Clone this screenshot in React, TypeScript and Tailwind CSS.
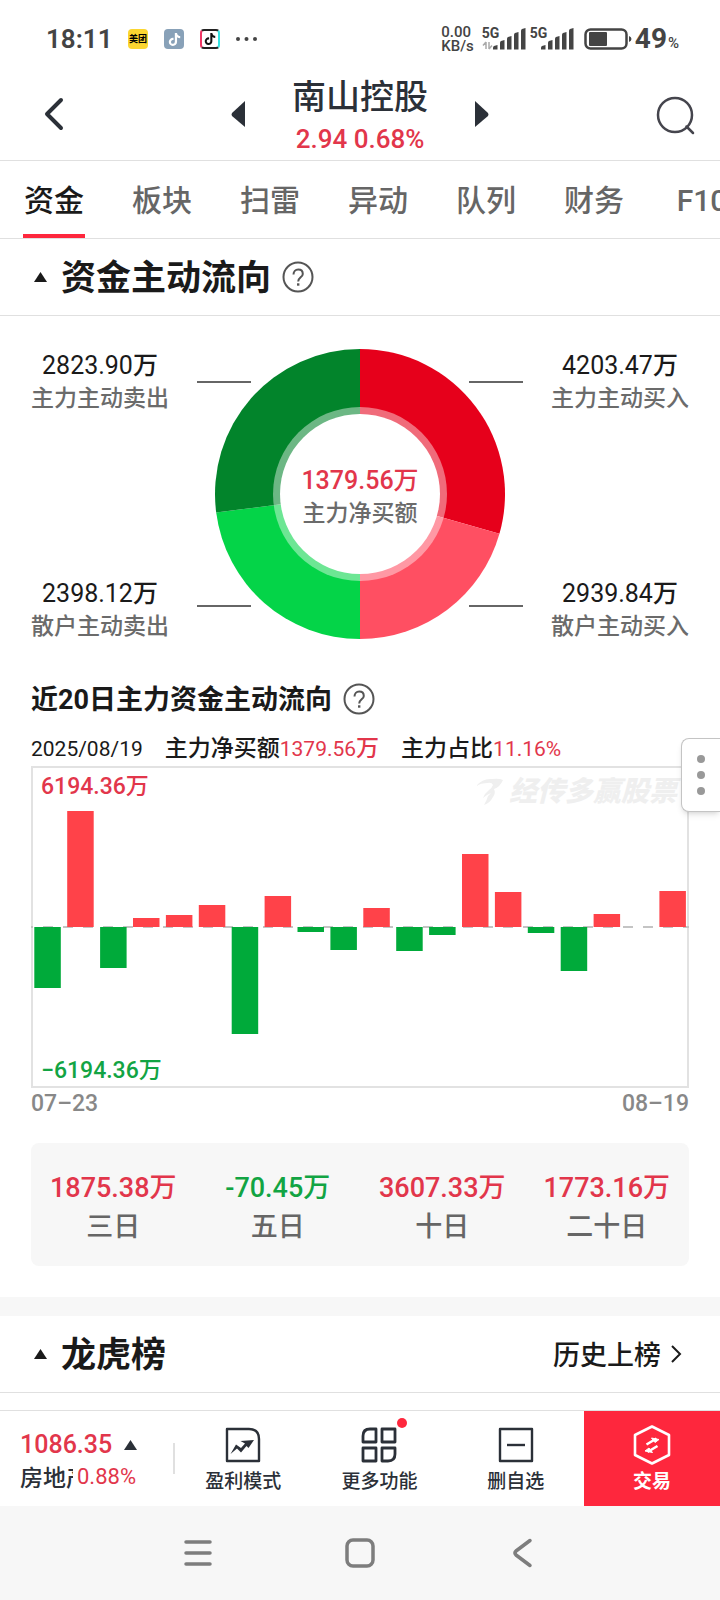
import React from 'react'
import { FaTiktok } from 'react-icons/fa6'

const tabs = ['资金', '板块', '扫雷', '异动', '队列', '财务', 'F10']

const flow = {
  mainSell: 2823.9,
  mainBuy: 4203.47,
  retailSell: 2398.12,
  retailBuy: 2939.84,
}

// bar heights in chart units, positive is net buying
const bars = [-61, 116, -41, 9, 12, 22, -107, 31, -5, -23, 19, -24, -8, 73, 35, -6, -44, 13, 0, 36]

const summary = [
  { value: '1875.38', label: '三日', up: true },
  { value: '-70.45', label: '五日', up: false },
  { value: '3607.33', label: '十日', up: true },
  { value: '1773.16', label: '二十日', up: true },
]

const Signal = ({ active = false }: { active?: boolean }) => (
  <svg width="45" height="24" viewBox="0 0 45 24" fill="#444">
    {[3, 8, 12, 16, 20].map((h, i) => (
      <path key={i} d={`M${11 + i * 7} 22.5v${-h + 1}q0-1 1-1.500l3.500-1v${h + 1.5}z`} />
    ))}
    {active && (
      <path d="M4 15v7M1 18.500l3-3.500M7 22v-7M7 22l3-3.500" stroke="#aaa" strokeWidth="1.500" fill="none" />
    )}
  </svg>
)

const StatusBar = () => (
  <div className="flex h-[76px] items-center justify-between pl-[46px] pr-[41px] pt-0.5 text-[#444]">
    <div className="flex items-center gap-4">
      <span className="w-[66px] text-[26px] font-semibold leading-8">18:11</span>
      <span className="flex size-5 items-center justify-center rounded bg-[#fbd631] text-[9px] font-bold leading-5 text-black">
        美团
      </span>
      <span className="flex size-5 items-center justify-center rounded bg-[#88a1b8]">
        <FaTiktok size={13} color="#fff" />
      </span>
      <span className="flex size-5 items-center justify-center rounded border-2 border-y-[#222] border-l-[#f03765] border-r-[#35e5e5] bg-white">
        <FaTiktok size={12} color="#111" />
      </span>
      <svg width="21" height="4" viewBox="0 0 21 4" fill="#444">
        <circle cx="2" cy="2" r="2" />
        <circle cx="10.500" cy="2" r="2" />
        <circle cx="19" cy="2" r="2" />
      </svg>
    </div>

    <div className="flex items-center">
      <div className="mr-2 text-[15px] font-medium leading-[14px]">
        <p>0.00</p>
        <p>KB/s</p>
      </div>
      <div className="relative mr-[3px]">
        <span className="absolute left-0 top-0 text-[14px] font-bold leading-3">5G</span>
        <Signal active />
      </div>
      <div className="relative mr-[9px]">
        <span className="absolute left-0 top-0 text-[14px] font-bold leading-3">5G</span>
        <Signal />
      </div>
      <svg width="48" height="22" viewBox="0 0 48 22">
        <rect x="1.500" y="1.500" width="41" height="19" rx="5" fill="none" stroke="#444" strokeWidth="2.500" />
        <rect x="5" y="4" width="18" height="14" rx="1" fill="#444" />
        <path d="M45 8q2.500 1 2.500 3t-2.500 3z" fill="#444" />
      </svg>
      <span className="ml-[3px] text-[28px] font-bold leading-8">49</span>
      <span className="ml-px pt-2 text-[15px] font-medium leading-4">%</span>
    </div>
  </div>
)

const Header = () => (
  <header className="flex h-[85px] items-center justify-between border-b border-[#e0e0e0] pl-[43px] pr-[23px] text-[#2b3038]">
    <button aria-label="返回" className="w-[22px] pb-2">
      <svg width="22" height="36" viewBox="0 0 22 36" fill="none" stroke="currentColor" strokeWidth="4" strokeLinecap="round" strokeLinejoin="round">
        <path d="M18 4 L4 18 L18 32" />
      </svg>
    </button>
    <div className="flex items-center">
      <button aria-label="上一只" className="pb-2">
        <svg width="14" height="28" viewBox="0 0 14 28" fill="currentColor">
          <path d="M14 1v26L1 16q-1-1.500 0-3z" />
        </svg>
      </button>
      <div className="w-[230px] text-center">
        <h1 className="text-[34px] font-medium leading-[42px]">南山控股</h1>
        <p className="text-[26px] font-medium leading-[42px] text-[#e2364b]">2.94 0.68%</p>
      </div>
      <button aria-label="下一只" className="pb-2">
        <svg width="14" height="28" viewBox="0 0 14 28" fill="currentColor">
          <path d="M0 1v26l13-11q1-1.500 0-3z" />
        </svg>
      </button>
    </div>
    <button aria-label="搜索" className="pb-2">
      <svg width="42" height="42" viewBox="0 0 42 42" fill="none" stroke="#45454d" strokeWidth="2.500" strokeLinecap="round">
        <circle cx="20" cy="22" r="17" />
        <path d="M31.500 33.500 L38 40" />
      </svg>
    </button>
  </header>
)

const HelpButton = () => (
  <button aria-label="说明" className="ml-[11px]">
    <svg className="size-8" viewBox="0 0 32 32" fill="none" stroke="#555" strokeWidth="2">
      <circle cx="16" cy="16" r="14.500" />
      <path d="M11.500 13.500c0-3 2-5 4.700-5s4.600 1.800 4.600 4.400c0 3.400-4.600 3.600-4.600 7.600" />
      <path d="M16.200 22.300v2.400" strokeWidth="2.400" />
    </svg>
  </button>
)

const SectionHeader = ({ title, children }: { title: string; children?: React.ReactNode }) => (
  <div className="flex h-[77px] items-center border-b border-[#e0e0e0] pl-[34px] pr-[37px] text-[#1a1a1a]">
    <svg width="13" height="10" viewBox="0 0 13 10" fill="currentColor">
      <path d="M6.500 0 L13 10 H0z" />
    </svg>
    <h2 className="ml-[14px] pt-1 text-[35px] font-bold leading-[42px]">{title}</h2>
    {children}
  </div>
)

const FlowItem = ({ value, label }: { value: number; label: string }) => (
  <div className="text-center leading-[33px]">
    <p className="text-[25px] text-[#1a1a1a]">
      {value.toFixed(2)}
      <span className="font-medium">万</span>
    </p>
    <p className="text-[23px] font-medium text-[#6b6b6b]">{label}</p>
  </div>
)

const CX = 163
const CY = 145

// angle is in degrees, clockwise from twelve o'clock
const point = (r: number, angle: number) => {
  const a = ((angle - 90) * Math.PI) / 180
  return `${(CX + r * Math.cos(a)).toFixed(2)} ${(CY + r * Math.sin(a)).toFixed(2)}`
}

const slice = (r: number, from: number, to: number) =>
  `M${CX} ${CY} L${point(r, from)} A${r} ${r} 0 0 1 ${point(r, to)} Z`

const Donut = () => {
  const buy = (flow.mainBuy / (flow.mainBuy + flow.retailBuy)) * 180
  const sell = 360 - (flow.mainSell / (flow.mainSell + flow.retailSell)) * 180
  return (
    <div className="relative">
      <svg width="326" height="290" viewBox="0 0 326 290">
        <path d={slice(145, 0, buy)} fill="#e6001b" />
        <path d={slice(145, buy, 180)} fill="#ff4f62" />
        <path d={slice(145, 180, sell)} fill="#04d448" />
        <path d={slice(145, sell, 360)} fill="#02842b" />
        <circle cx={CX} cy={CY} r="87" fill="#fff" fillOpacity="0.420" />
        <circle cx={CX} cy={CY} r="80" fill="#fff" />
        <path d="M0 33h54M272 33h54M0 257h54M272 257h54" stroke="#666" strokeWidth="2" />
      </svg>
      <div className="absolute inset-x-0 top-[115px] text-center leading-[33px]">
        <p className="text-[25px] font-medium text-[#e2364b]">1379.56万</p>
        <p className="text-[23px] font-medium text-[#6b6b6b]">主力净买额</p>
      </div>
    </div>
  )
}

const BarChart = () => (
  <svg className="block w-full" viewBox="0 0 658 322">
    <rect x="1" y="1" width="656" height="320" fill="none" stroke="#e2e2e2" strokeWidth="2" />
    <path d="M0 161h658" stroke="#c4c4c4" strokeWidth="2" strokeDasharray="10 10" strokeDashoffset="8" />
    {bars.map((v, i) => (
      <rect
        key={i}
        x={3.3 + i * 32.9}
        y={v > 0 ? 161 - v : 161}
        width="26.500"
        height={Math.abs(v)}
        fill={v > 0 ? '#ff4249' : '#00aa3a'}
      />
    ))}
  </svg>
)

const Watermark = () => (
  <div className="absolute right-3 top-2 flex items-center gap-1 text-[#efefef]">
    <svg width="30" height="30" viewBox="0 0 30 30" fill="currentColor">
      <path d="M1 9Q8 1 17 2q7-1 11 1-3 7-9 9 2 4-1 8-3 6-9 8 3-5 4-9l3-3q-5 2-8 5 2-5 6-8 3-2 4-5-1-3-6-2Q6 6 1 9z" />
    </svg>
    <span className="text-[28px] font-black italic leading-9">经传多赢股票</span>
  </div>
)

const ToolButton = ({ label, children }: { label: string; children: React.ReactNode }) => (
  <button className="flex flex-1 flex-col items-center pt-4">
    {children}
    <span className="mt-1.5 text-[19px] font-medium leading-[26px]">{label}</span>
  </button>
)

const Toolbar = () => (
  <div className="flex h-24 border-t border-[#e0e0e0] text-[#2b3038]">
    <a href="#index" className="block w-[173px] pl-5 pt-[17px] leading-[34px]">
      <div className="flex items-center gap-3">
        <span className="text-[25px] font-medium text-[#e2364b]">1086.35</span>
        <svg width="13" height="10" viewBox="0 0 13 10" fill="currentColor">
          <path d="M6.500 0 L13 10 H0z" />
        </svg>
      </div>
      <div className="flex gap-1">
        <span className="w-[53px] overflow-hidden whitespace-nowrap text-[23px] font-medium">房地产</span>
        <span className="text-[22px] leading-[30px] text-[#e2364b]">0.88%</span>
      </div>
    </a>
    <div className="mt-8 h-[31px] w-0.5 bg-[#e0e0e0]" />
    <ToolButton label="盈利模式">
      <svg className="size-9" viewBox="0 0 36 36" fill="none" stroke="currentColor" strokeWidth="2.400" strokeLinejoin="round">
        <path d="M2 2h22q10 0 10 10v22H2z" />
        <path d="M5.500 27L11 17.500l5 3.500 4-4.500-4.500-2.500L29 13l-5.500 8-2-2-5.500 6.500-4-4z" fill="currentColor" stroke="none" />
      </svg>
    </ToolButton>
    <ToolButton label="更多功能">
      <span className="relative">
        <svg className="size-9" viewBox="0 0 36 36" fill="none" stroke="currentColor" strokeWidth="2.800" strokeLinejoin="round">
          <path d="M9 2h6v13H2V9q0-7 7-7z" />
          <path d="M21 2h13v13H21z" />
          <path d="M2 21h13v13H2z" />
          <path d="M21 21h13v6q0 7-7 7h-6z" />
        </svg>
        <span className="absolute -right-[10px] -top-[9px] size-[10px] rounded-full bg-[#fe273d]" />
      </span>
    </ToolButton>
    <ToolButton label="删自选">
      <svg className="size-9" viewBox="0 0 36 36" fill="none" stroke="currentColor" strokeWidth="2.400" strokeLinejoin="round">
        <path d="M2 2h32v32H2z" />
        <path d="M9 18h18" />
      </svg>
    </ToolButton>
    <button className="flex w-[136px] flex-col items-center bg-[#fe273d] pt-[14px] text-white">
      <svg width="38" height="40" viewBox="0 0 38 40" fill="none" stroke="currentColor" strokeWidth="2.600" strokeLinejoin="round">
        <path d="M19 1.500L36 10v20l-17 8.500L2 30V10z" />
        <path d="M13.500 19.500l10-6M24.500 21l-10 6" />
        <path d="M18.500 13l7.500 1.500-4 3zM19.500 27.500l-7.500-1.500 4-3z" fill="currentColor" strokeWidth="1" />
      </svg>
      <span className="mt-1 text-[19px] font-bold leading-[26px]">交易</span>
    </button>
  </div>
)

const SystemNav = () => (
  <nav className="flex h-[94px] items-center justify-center gap-[132px] bg-[#f7f7f7]">
    <button aria-label="最近任务">
      <svg width="30" height="30" viewBox="0 0 30 30" stroke="#7d7d7d" strokeWidth="3.500" strokeLinecap="round">
        <path d="M3 4h24M3 15h24M3 26h24" />
      </svg>
    </button>
    <button aria-label="主屏幕">
      <svg width="30" height="30" viewBox="0 0 30 30" fill="none" stroke="#7d7d7d" strokeWidth="3.500">
        <rect x="2" y="2" width="26" height="26" rx="6" />
      </svg>
    </button>
    <button aria-label="返回上级">
      <svg width="30" height="30" viewBox="0 0 30 30" fill="none" stroke="#7d7d7d" strokeWidth="3.500" strokeLinecap="round" strokeLinejoin="round">
        <path d="M23 2.500L9 13q-2 2 0 4l14 10.500" />
      </svg>
    </button>
  </nav>
)

const App = () => {
  return (
    <div className="flex min-h-screen flex-col overflow-hidden bg-white font-['Roboto','Noto_Sans_CJK_SC',sans-serif]">
      <StatusBar />
      <Header />

      <div className="flex h-[78px] overflow-hidden border-b border-[#e0e0e0]">
        {tabs.map((tab, index) => (
          <button
            key={tab}
            className={`flex w-[108px] shrink-0 justify-center text-[30px] font-medium leading-[80px] ${
              index === 0 ? 'text-[#1a1a1a]' : 'text-[#666]'
            }`}
          >
            <span className={`h-[77px] px-px ${index === 0 ? 'border-b-4 border-[#fe273d]' : ''}`}>{tab}</span>
          </button>
        ))}
      </div>

      <main className="flex-1">
        <SectionHeader title="资金主动流向">
          <HelpButton />
        </SectionHeader>

        <section className="relative px-[31px] pt-[33px]">
          <div className="flex h-[294px] justify-between">
            <div className="flex flex-col justify-between">
              <FlowItem value={flow.mainSell} label="主力主动卖出" />
              <FlowItem value={flow.retailSell} label="散户主动卖出" />
            </div>
            <Donut />
            <div className="flex flex-col justify-between">
              <FlowItem value={flow.mainBuy} label="主力主动买入" />
              <FlowItem value={flow.retailBuy} label="散户主动买入" />
            </div>
          </div>

          <div className="mt-[39px] flex h-[34px] items-center">
            <h3 className="pt-0.5 text-[27px] font-bold leading-[34px] text-[#1a1a1a]">近20日主力资金主动流向</h3>
            <HelpButton />
          </div>

          <div className="mt-4 flex gap-[22px] text-[23px] font-medium leading-[34px] text-[#1a1a1a]">
            <span className="text-[21px] font-normal">2025/08/19</span>
            <p>
              主力净买额<span className="text-[21px] font-normal text-[#e2364b]">1379.56</span>
              <span className="text-[#e2364b]">万</span>
            </p>
            <p>
              主力占比<span className="text-[21px] font-normal text-[#e2364b]">11.16%</span>
            </p>
          </div>

          <div className="relative text-[23px] font-medium">
            <BarChart />
            <span className="absolute left-[10px] top-[5px] leading-8 text-[#e2364b]">6194.36万</span>
            <span className="absolute bottom-px left-[10px] leading-8 text-[#12a443]">−6194.36万</span>
            <Watermark />
          </div>
          <div className="flex justify-between pt-0.5 text-[23px] font-medium leading-7 text-[#888]">
            <span>07–23</span>
            <span>08–19</span>
          </div>

          <button
            aria-label="更多"
            className="absolute right-0 top-[422px] flex h-[74px] w-[39px] flex-col items-center justify-center gap-2 rounded-l-lg border border-r-0 border-[#c4c4c4] bg-white shadow-md"
          >
            <span className="size-2 rounded-full bg-[#999]" />
            <span className="size-2 rounded-full bg-[#999]" />
            <span className="size-2 rounded-full bg-[#999]" />
          </button>

          <div className="mb-[31px] mt-[25px] grid grid-cols-4 rounded-lg bg-[#f7f7f7] pb-[19px] pt-[26px] text-center text-[27px] font-medium leading-[39px]">
            {summary.map((item) => (
              <div key={item.label}>
                <p className={item.up ? 'text-[#e2364b]' : 'text-[#12a443]'}>{item.value}万</p>
                <p className="text-[#666]">{item.label}</p>
              </div>
            ))}
          </div>
        </section>

        <div className="h-[19px] bg-[#f7f7f7]" />

        <SectionHeader title="龙虎榜">
          <a href="#history" className="ml-auto flex items-center gap-2 text-[27px] font-medium leading-9">
            <span className="pt-1">历史上榜</span>
            <svg width="14" height="20" viewBox="0 0 14 20" fill="none" stroke="currentColor" strokeWidth="2">
              <path d="M3 2l8 8-8 8" />
            </svg>
          </a>
        </SectionHeader>
      </main>

      <Toolbar />
      <SystemNav />
    </div>
  )
}

export default App
